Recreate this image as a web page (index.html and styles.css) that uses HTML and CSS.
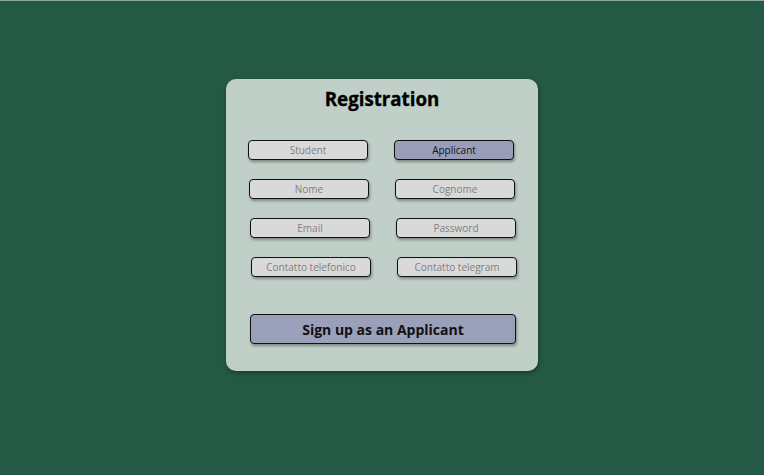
FILE: index.html
```html
<!DOCTYPE html>
<html lang="it">
<head>
<meta charset="utf-8">
<title>Registration</title>
<link rel="stylesheet" href="styles.css">
</head>
<body>
<main class="page">
  <section class="card">
    <h1 class="title">Registration</h1>
    <div class="row row-1">
      <button class="field toggle">Student</button>
      <button class="field toggle active">Applicant</button>
    </div>
    <div class="row row-2">
      <input class="field" type="text" placeholder="Nome">
      <input class="field" type="text" placeholder="Cognome">
    </div>
    <div class="row row-3">
      <input class="field" type="email" placeholder="Email">
      <input class="field" type="password" placeholder="Password">
    </div>
    <div class="row row-4">
      <input class="field" type="text" placeholder="Contatto telefonico">
      <input class="field" type="text" placeholder="Contatto telegram">
    </div>
    <button class="submit">Sign up as an Applicant</button>
  </section>
</main>
</body>
</html>
```
FILE: styles.css
```css
* { box-sizing: border-box; }
html, body { margin: 0; padding: 0; }
body {
  background: #245a45;
  font-family: "Open Sans", "Liberation Sans", sans-serif;
  height: 475px;
  overflow: hidden;
  border-top: 1px solid #8fa89c;
}
.page {
  display: flex;
  justify-content: center;
  padding-top: 78px;
}
.card {
  width: 312px;
  height: 292px;
  background: #c0d0c9;
  border-radius: 10px;
  box-shadow: 1px 2px 4px rgba(0,0,0,0.35);
  padding: 7px 22px 27px;
  display: flex;
  flex-direction: column;
}
.title {
  margin: 0 0 28px;
  font-size: 18.7px;
  line-height: 26px;
  font-weight: 700;
  -webkit-text-stroke: 0.35px #000;
  text-align: center;
  color: #000;
}
.row {
  display: flex;
  gap: 26px;
  margin-bottom: 19px;
}
.row-2 { margin-left: 1px; }
.row-3 { margin-left: 2px; }
.row-4 { margin-left: 3px; margin-bottom: 0; }
.field {
  width: 120px;
  height: 20px;
  border: 1px solid #111;
  border-radius: 4px;
  background: #d9d9d9;
  box-shadow: 1px 2px 3px rgba(0,0,0,0.35);
  font-family: "Open Sans", "Liberation Sans", sans-serif;
  font-size: 10px;
  line-height: 18px;
  color: #808080;
  text-align: center;
  padding: 0;
  margin: 0;
  outline: none;
}
.field::placeholder { color: #808080; opacity: 1; }
.toggle { cursor: pointer; }
.toggle.active {
  background: #9a9db8;
  color: #111;
}
.submit {
  margin: 37px 0 0 2px;
  width: 266px;
  height: 30px;
  border: 1px solid #111;
  border-radius: 4px;
  background: #9a9fba;
  box-shadow: 1px 2px 3px rgba(0,0,0,0.35);
  font-family: "Open Sans", "Liberation Sans", sans-serif;
  font-size: 14px;
  font-weight: 700;
  color: #111;
  padding: 0;
  cursor: pointer;
}
```
